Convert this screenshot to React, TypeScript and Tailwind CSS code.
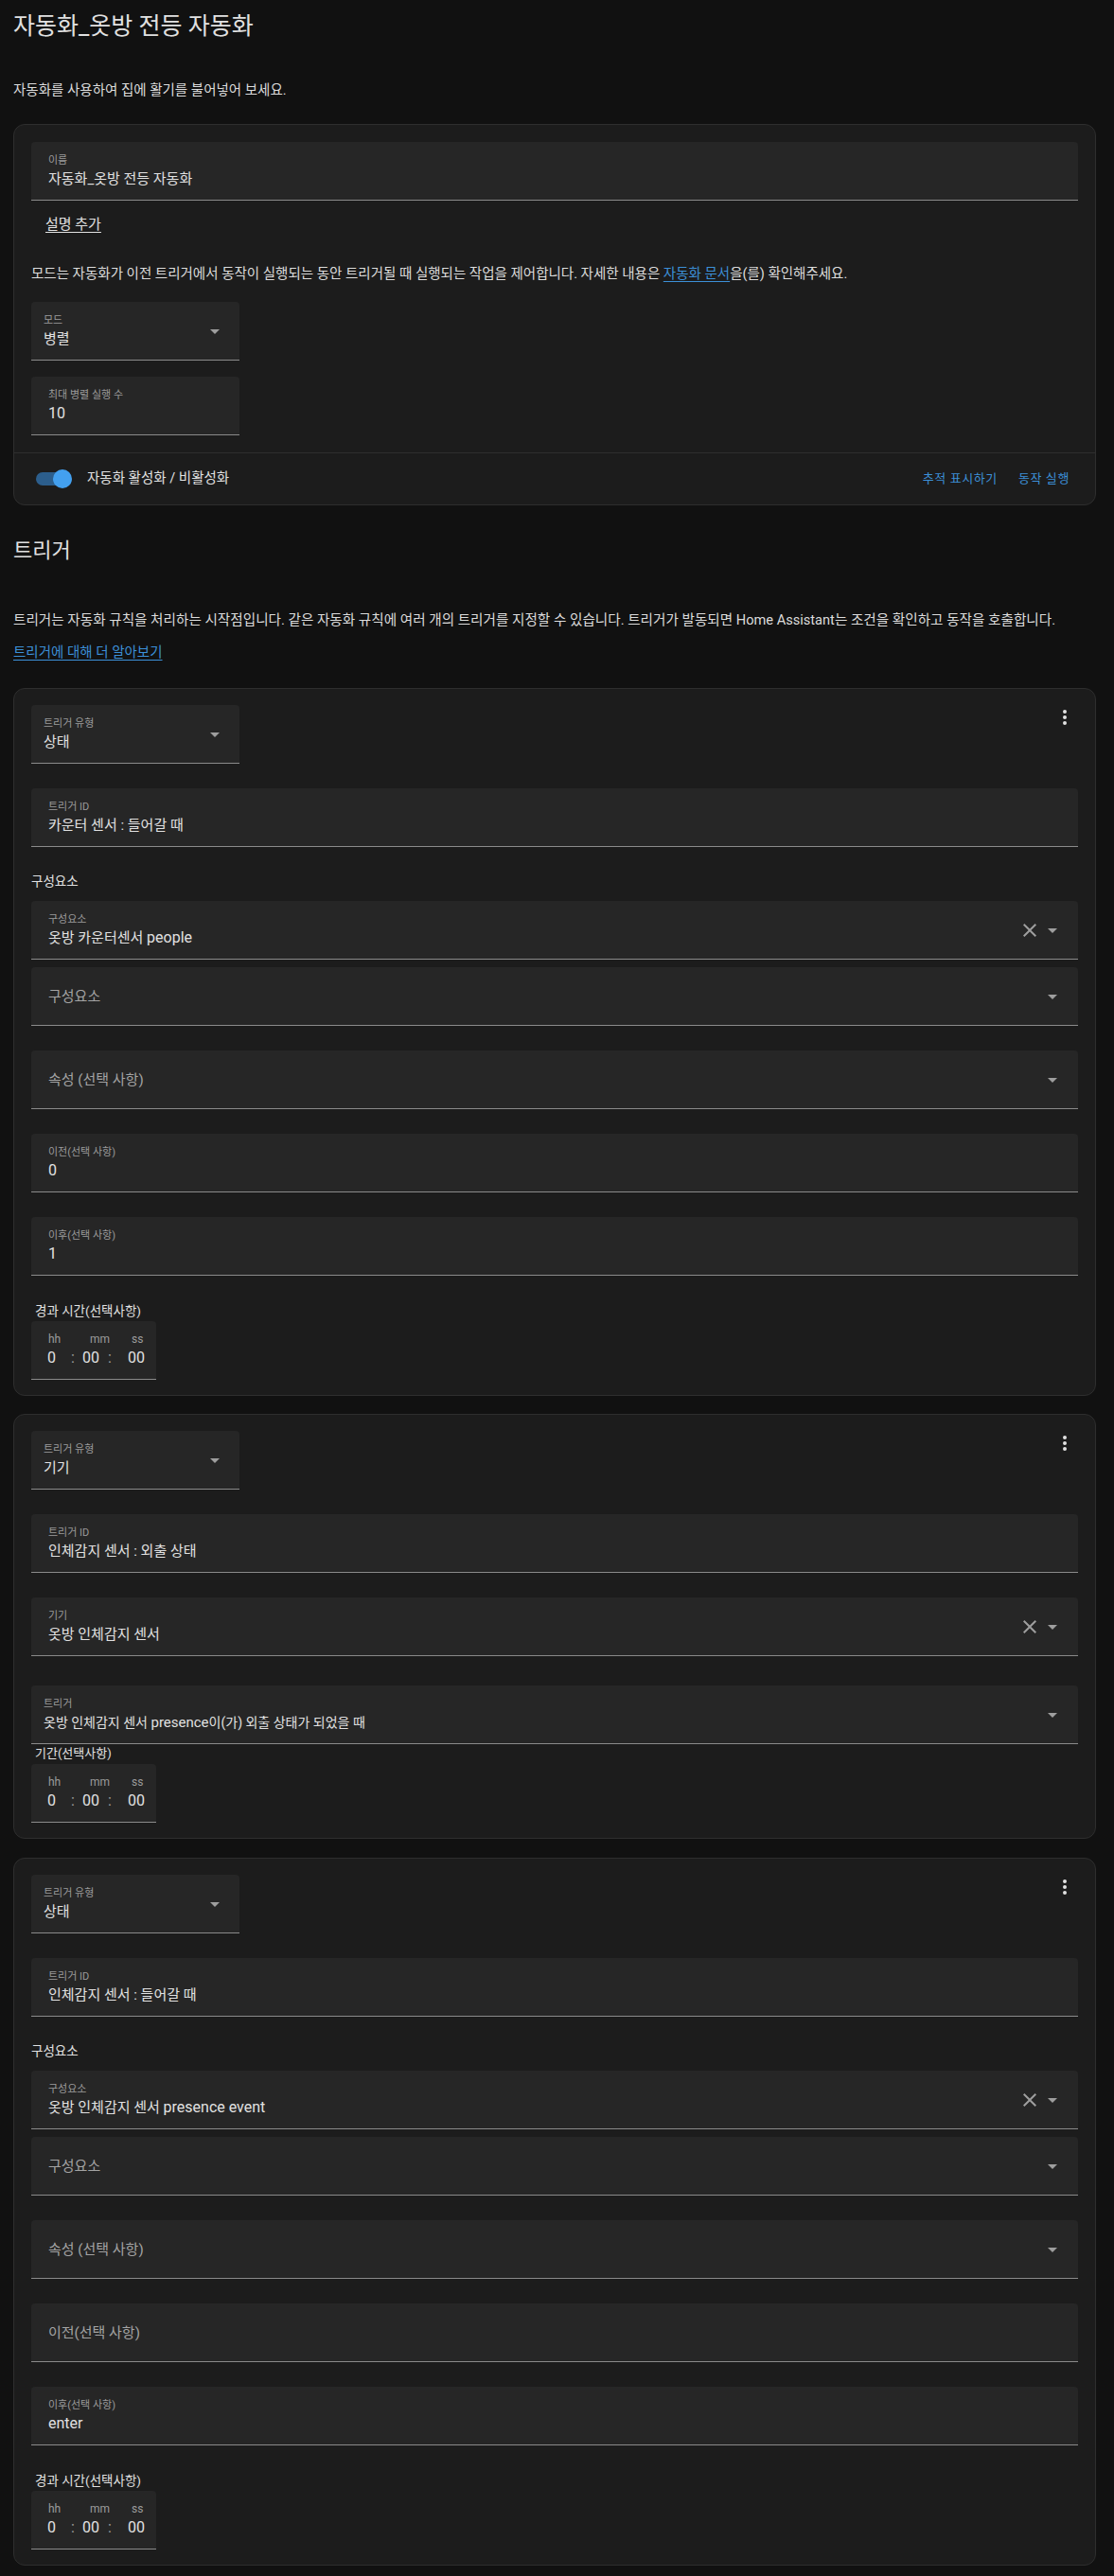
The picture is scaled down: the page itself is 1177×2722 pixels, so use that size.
import { FC, ReactNode } from "react";

const Caret = () => (
	<svg width="10" height="5" viewBox="0 0 10 5" className="shrink-0">
		<path d="M0 0L5 5L10 0Z" fill="#9e9e9e" />
	</svg>
);

const Clear = () => (
	<svg width="24" height="24" viewBox="0 0 24 24" className="shrink-0">
		<path
			d="M19,6.41L17.59,5L12,10.59L6.41,5L5,6.41L10.59,12L5,17.59L6.41,19L12,13.41L17.59,19L19,17.59L13.41,12L19,6.41Z"
			fill="#9e9e9e"
		/>
	</svg>
);

const Dots = () => (
	<svg width="24" height="24" viewBox="0 0 24 24" className="mr-[2px] mt-[1px] shrink-0">
		<path
			d="M12,16A2,2 0 0,1 14,18A2,2 0 0,1 12,20A2,2 0 0,1 10,18A2,2 0 0,1 12,16M12,10A2,2 0 0,1 14,12A2,2 0 0,1 12,14A2,2 0 0,1 10,12A2,2 0 0,1 12,10M12,4A2,2 0 0,1 14,6A2,2 0 0,1 12,8A2,2 0 0,1 10,6A2,2 0 0,1 12,4Z"
			fill="#e1e1e1"
		/>
	</svg>
);

// latin runs are set larger, the korean glyphs of the source font are narrow
const Latin: FC<{ children: ReactNode }> = ({ children }) => <span className="text-[16px]">{children}</span>;

interface FieldProps {
	label?: string;
	value?: ReactNode;
	placeholder?: string;
	select?: boolean;
	clearable?: boolean;
	narrow?: boolean;
	tight?: boolean;
}

const Field: FC<FieldProps> = ({ label, value, placeholder, select, clearable, narrow, tight }) => (
	<div
		className={`flex h-[62px] items-center rounded-t-[4px] border-b border-[#8a8a8a] bg-[#262626] ${
			narrow ? "w-[220px] pr-[21px]" : "w-full pr-[22px]"
		} ${tight ? "pl-[13px]" : "pl-[18px]"}`}
	>
		<div className="flex min-w-0 flex-1 flex-col">
			{placeholder ? (
				<span className="text-[15px] leading-[20px] text-[#a3a3a3]">{placeholder}</span>
			) : (
				<>
					<span className="text-[11px] leading-[14px] text-[#9b9b9b]">{label}</span>
					<span className="mt-[2px] whitespace-nowrap text-[15px] leading-[20px] text-[#e1e1e1]">{value}</span>
				</>
			)}
		</div>
		{clearable && (
			<div className="mr-[7px] flex">
				<Clear />
			</div>
		)}
		{select && (
			<div className="mt-[2px] flex">
				<Caret />
			</div>
		)}
	</div>
);

const Duration = () => (
	<div className="flex h-[62px] w-[132px] flex-col justify-center rounded-t-[4px] border-b border-[#8a8a8a] bg-[#262626] pl-[17px]">
		<div className="flex text-[12px] leading-[13px] text-[#9b9b9b]">
			<span className="w-[45px] pl-[1px]">hh</span>
			<span className="w-[44px]">mm</span>
			<span>ss</span>
		</div>
		<div className="mt-[3px] flex text-[16px] leading-[19px] text-[#e1e1e1]">
			<span className="w-[25px]">0</span>
			<span className="w-[12px] text-[#9b9b9b]">:</span>
			<span className="w-[27px]">00</span>
			<span className="w-[21px] text-[#9b9b9b]">:</span>
			<span>00</span>
		</div>
	</div>
);

const Card: FC<{ children: ReactNode; className?: string }> = ({ children, className }) => (
	<div className={`w-[1144px] rounded-[12px] border border-[#2e2e2e] bg-[#1c1c1c] ${className ?? ""}`}>{children}</div>
);

const TriggerHeader: FC<{ type: string }> = ({ type }) => (
	<div className="flex items-start justify-between">
		<Field select narrow tight label="트리거 유형" value={type} />
		<Dots />
	</div>
);

const SectionLabel: FC<{ children: ReactNode; className?: string }> = ({ children, className }) => (
	<div className={`text-[13.5px] leading-[20px] text-[#e1e1e1] ${className ?? ""}`}>{children}</div>
);

const StateTrigger: FC<{ id: string; entity: ReactNode; from?: ReactNode; to?: ReactNode; className?: string }> = ({
	id,
	entity,
	from,
	to,
	className,
}) => (
	<Card className={className}>
		<div className="px-[18px] pb-[16px] pt-[17px]">
			<TriggerHeader type="상태" />
			<div className="mt-[26px]">
				<Field label="트리거 ID" value={id} />
			</div>
			<SectionLabel className="mt-[26px]">구성요소</SectionLabel>
			<div className="mt-[11px]">
				<Field select clearable label="구성요소" value={entity} />
			</div>
			<div className="mt-[8px]">
				<Field select placeholder="구성요소" />
			</div>
			<div className="mt-[26px]">
				<Field select placeholder="속성 (선택 사항)" />
			</div>
			<div className="mt-[26px]">
				{from !== undefined ? <Field label="이전(선택 사항)" value={from} /> : <Field placeholder="이전(선택 사항)" />}
			</div>
			<div className="mt-[26px]">
				<Field label="이후(선택 사항)" value={to} />
			</div>
			<SectionLabel className="mt-[27px] pl-[4px]">경과 시간(선택사항)</SectionLabel>
			<div className="mt-[1px]">
				<Duration />
			</div>
		</div>
	</Card>
);

const App: FC = () => {
	return (
		<div className="min-h-screen bg-[#111111] px-[14px] pb-[11px] pt-[12px] font-[family-name:Roboto,Noto_Sans_CJK_KR,sans-serif] text-[#e1e1e1]">
			<h1 className="text-[25px] font-normal leading-[32px] text-[#e1e1e1]">자동화_옷방 전등 자동화</h1>
			<p className="mt-[42px] text-[14.5px] leading-[20px] text-[#dcdcdc]">자동화를 사용하여 집에 활기를 불어넣어 보세요.</p>

			<Card className="mt-[25px]">
				<div className="px-[18px] pb-[18px] pt-[18px]">
					<Field label="이름" value="자동화_옷방 전등 자동화" />
					<div className="mt-[15px] pl-[15px] text-[15px] leading-[20px] text-[#e1e1e1] underline underline-offset-[3px]">
						설명 추가
					</div>
					<p className="mt-[33px] whitespace-nowrap text-[14.5px] leading-[20px] text-[#dcdcdc]">
						모드는 자동화가 이전 트리거에서 동작이 실행되는 동안 트리거될 때 실행되는 작업을 제어합니다. 자세한 내용은{" "}
						<span className="text-[#3c90d8] underline underline-offset-[3px]">자동화 문서</span>을(를) 확인해주세요.
					</p>
					<div className="mt-[19px]">
						<Field select narrow tight label="모드" value="병렬" />
					</div>
					<div className="mt-[17px]">
						<Field narrow label="최대 병렬 실행 수" value={<Latin>10</Latin>} />
					</div>
				</div>
				<div className="flex h-[55px] items-center justify-between border-t border-[#2e2e2e] pl-[23px] pr-[27px]">
					<div className="flex items-center">
						<div className="relative flex h-[20px] w-[40px] items-center">
							<div className="h-[14px] w-[36px] rounded-full bg-[#2c5e8c]" />
							<div className="absolute left-[18px] top-0 h-[20px] w-[20px] rounded-full bg-[#43a0ef]" />
						</div>
						<span className="ml-[14px] text-[14.5px] leading-[20px] text-[#e1e1e1]">자동화 활성화 / 비활성화</span>
					</div>
					<div className="flex items-center gap-[22px] text-[13px] tracking-[0.6px] text-[#3c90d8]">
						<span>추적 표시하기</span>
						<span>동작 실행</span>
					</div>
				</div>
			</Card>

			<h2 className="mt-[34px] text-[22px] font-normal leading-[28px] text-[#e1e1e1]">트리거</h2>
			<p className="mt-[49px] whitespace-nowrap text-[14.6px] leading-[20px] text-[#dcdcdc]">
				트리거는 자동화 규칙을 처리하는 시작점입니다. 같은 자동화 규칙에 여러 개의 트리거를 지정할 수 있습니다. 트리거가
				발동되면 Home Assistant는 조건을 확인하고 동작을 호출합니다.
			</p>
			<div className="mt-[15px] text-[14.5px] leading-[20px]">
				<span className="text-[#3c90d8] underline underline-offset-[3px]">트리거에 대해 더 알아보기</span>
			</div>

			<StateTrigger
				className="mt-[27px]"
				id="카운터 센서 : 들어갈 때"
				entity={
					<>
						옷방 카운터센서 <Latin>people</Latin>
					</>
				}
				from={<Latin>0</Latin>}
				to={<Latin>1</Latin>}
			/>

			<Card className="mt-[19px]">
				<div className="px-[18px] pb-[16px] pt-[17px]">
					<TriggerHeader type="기기" />
					<div className="mt-[26px]">
						<Field label="트리거 ID" value="인체감지 센서 : 외출 상태" />
					</div>
					<div className="mt-[26px]">
						<Field select clearable label="기기" value="옷방 인체감지 센서" />
					</div>
					<div className="mt-[31px]">
						<Field
							select
							tight
							label="트리거"
							value={
								<span className="text-[14px]">
									옷방 인체감지 센서 <span className="text-[15px]">presence</span>이(가) 외출 상태가 되었을 때
								</span>
							}
						/>
					</div>
					<div className="pl-[4px] text-[13px] leading-[20px] text-[#e1e1e1]">기간(선택사항)</div>
					<div className="mt-[1px]">
						<Duration />
					</div>
				</div>
			</Card>

			<StateTrigger
				className="mt-[20px]"
				id="인체감지 센서 : 들어갈 때"
				entity={
					<>
						옷방 인체감지 센서 <Latin>presence event</Latin>
					</>
				}
				to={<Latin>enter</Latin>}
			/>
		</div>
	);
};

export default App;
